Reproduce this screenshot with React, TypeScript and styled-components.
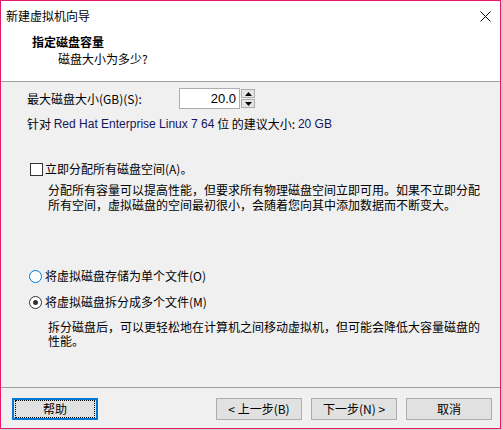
import React from 'react';
import styled, { createGlobalStyle } from 'styled-components';

const GlobalStyle = createGlobalStyle`
  html, body {
    margin: 0;
    padding: 0;
    background: #cfcfcf;
  }
  body {
    font-family: "Noto Sans CJK SC", "Liberation Sans", sans-serif;
    font-size: 12px;
    color: #000;
  }
`;

const Page = styled.div`
  width: 503px;
  height: 430px;
  overflow: hidden;
`;

const Window = styled.div`
  width: 501px;
  height: 429px;
  box-sizing: border-box;
  border: 1px solid #e8196a;
  background: #f0f0f0;
  display: flex;
  flex-direction: column;
`;

const Top = styled.div`
  background: #fff;
  height: 81px;
  box-sizing: border-box;
  border-bottom: 1px solid #a0a0a0;
`;

const TitleBar = styled.div`
  height: 30px;
  display: flex;
  align-items: center;
  justify-content: space-between;
  padding: 0 9px 0 5px;
  line-height: 16px;
`;

const CloseIcon = styled.svg`
  width: 11px;
  height: 11px;
`;

const Header = styled.div`
  padding-top: 3px;
  line-height: 16px;
`;

const HeaderTitle = styled.div`
  padding-left: 31px;
  font-weight: bold;
`;

const HeaderSub = styled.div`
  padding-left: 57px;
  margin-top: 1px;
`;

const Body = styled.div`
  flex: 1;
  padding-left: 26px;
  line-height: 16px;
`;

const Row = styled.div<{ $top: number }>`
  display: flex;
  align-items: center;
  margin-top: ${(p) => p.$top}px;
`;

const Label = styled.div`
  width: 152px;
`;

const Spin = styled.div`
  display: flex;
  align-items: center;
  height: 21px;
`;

const SpinInput = styled.div`
  width: 61px;
  height: 21px;
  box-sizing: border-box;
  border: 1px solid #abadb3;
  background: #fff;
  text-align: right;
  padding-right: 3px;
  line-height: 19px;
  font-size: 13px;
  font-family: "Liberation Sans", sans-serif;
`;

const SpinButtons = styled.div`
  margin-left: 1px;
  display: flex;
  flex-direction: column;
  gap: 1px;
`;

const SpinButton = styled.div`
  width: 14px;
  height: 9px;
  box-sizing: border-box;
  border: 1px solid #adadad;
  background: #e5e5e5;
  display: flex;
  align-items: center;
  justify-content: center;
`;

const Latin = styled.span`
  color: #15155e;
  font-family: "Liberation Sans", sans-serif;
`;

const Check = styled.div`
  width: 13px;
  height: 13px;
  box-sizing: border-box;
  border: 1px solid #333;
  background: #fff;
  margin: 0 2px 0 3px;
`;

const Radio = styled.div<{ $checked?: boolean; $focus?: boolean }>`
  width: 13px;
  height: 13px;
  box-sizing: border-box;
  border-radius: 50%;
  border: 1px solid ${(p) => (p.$focus ? '#0078d7' : '#333')};
  background: #fff;
  margin: 0 3px 0 2px;
  display: flex;
  align-items: center;
  justify-content: center;
  &::after {
    content: '';
    display: ${(p) => (p.$checked ? 'block' : 'none')};
    width: 5px;
    height: 5px;
    border-radius: 50%;
    background: #333;
  }
`;

const Para = styled.div<{ $top: number; $lh: number }>`
  margin-top: ${(p) => p.$top}px;
  padding-left: 21px;
  line-height: ${(p) => p.$lh}px;
  width: 434px;
`;

const Footer = styled.div`
  height: 41px;
  box-sizing: border-box;
  border-top: 1px solid #a0a0a0;
  padding: 10px 8px 0 11px;
  display: flex;
`;

const Button = styled.div<{ $focus?: boolean }>`
  width: 86px;
  height: 22px;
  box-sizing: border-box;
  border: ${(p) => (p.$focus ? '2px solid #0078d7' : '1px solid #adadad')};
  background: #e1e1e1;
  display: flex;
  align-items: center;
  justify-content: center;
  line-height: 16px;
  margin-left: 9px;
  &:first-child {
    margin-left: 0;
    margin-right: auto;
  }
`;

const FocusRect = styled.div`
  width: 100%;
  height: 100%;
  margin: 1px;
  box-sizing: border-box;
  border: 1px dotted #000;
  display: flex;
  align-items: center;
  justify-content: center;
`;

export default function App() {
  return (
    <Page>
      <GlobalStyle />
      <Window>
        <Top>
          <TitleBar>
            <span>新建虚拟机向导</span>
            <CloseIcon viewBox="0 0 11 11">
              <path d="M0.5 0.5L10.5 10.5M10.5 0.5L0.5 10.5" stroke="#000" strokeWidth="1" />
            </CloseIcon>
          </TitleBar>
          <Header>
            <HeaderTitle>指定磁盘容量</HeaderTitle>
            <HeaderSub>磁盘大小为多少?</HeaderSub>
          </Header>
        </Top>
        <Body>
          <Row $top={6}>
            <Label>最大磁盘大小(GB)(S):</Label>
            <Spin>
              <SpinInput>20.0</SpinInput>
              <SpinButtons>
                <SpinButton>
                  <svg width="7" height="4" viewBox="0 0 7 4">
                    <path d="M0 4L3.5 0L7 4Z" fill="#000" />
                  </svg>
                </SpinButton>
                <SpinButton>
                  <svg width="7" height="4" viewBox="0 0 7 4">
                    <path d="M0 0L3.5 4L7 0Z" fill="#000" />
                  </svg>
                </SpinButton>
              </SpinButtons>
            </Spin>
          </Row>
          <Row $top={7}>
            针对&nbsp;<Latin>Red Hat Enterprise Linux 7 64</Latin>&nbsp;位 的建议大小:&nbsp;<Latin>20 GB</Latin>
          </Row>
          <Row $top={29}>
            <Check />
            立即分配所有磁盘空间(A)。
          </Row>
          <Para $top={5} $lh={15}>
            分配所有容量可以提高性能，但要求所有物理磁盘空间立即可用。如果不立即分配所有空间，虚拟磁盘的空间最初很小，会随着您向其中添加数据而不断变大。
          </Para>
          <Row $top={56}>
            <Radio $focus />
            将虚拟磁盘存储为单个文件(O)
          </Row>
          <Row $top={10}>
            <Radio $checked />
            将虚拟磁盘拆分成多个文件(M)
          </Row>
          <Para $top={10} $lh={14}>
            拆分磁盘后，可以更轻松地在计算机之间移动虚拟机，但可能会降低大容量磁盘的性能。
          </Para>
        </Body>
        <Footer>
          <Button $focus>
            <FocusRect>帮助</FocusRect>
          </Button>
          <Button>&lt; 上一步(B)</Button>
          <Button>下一步(N) &gt;</Button>
          <Button>取消</Button>
        </Footer>
      </Window>
    </Page>
  );
}
